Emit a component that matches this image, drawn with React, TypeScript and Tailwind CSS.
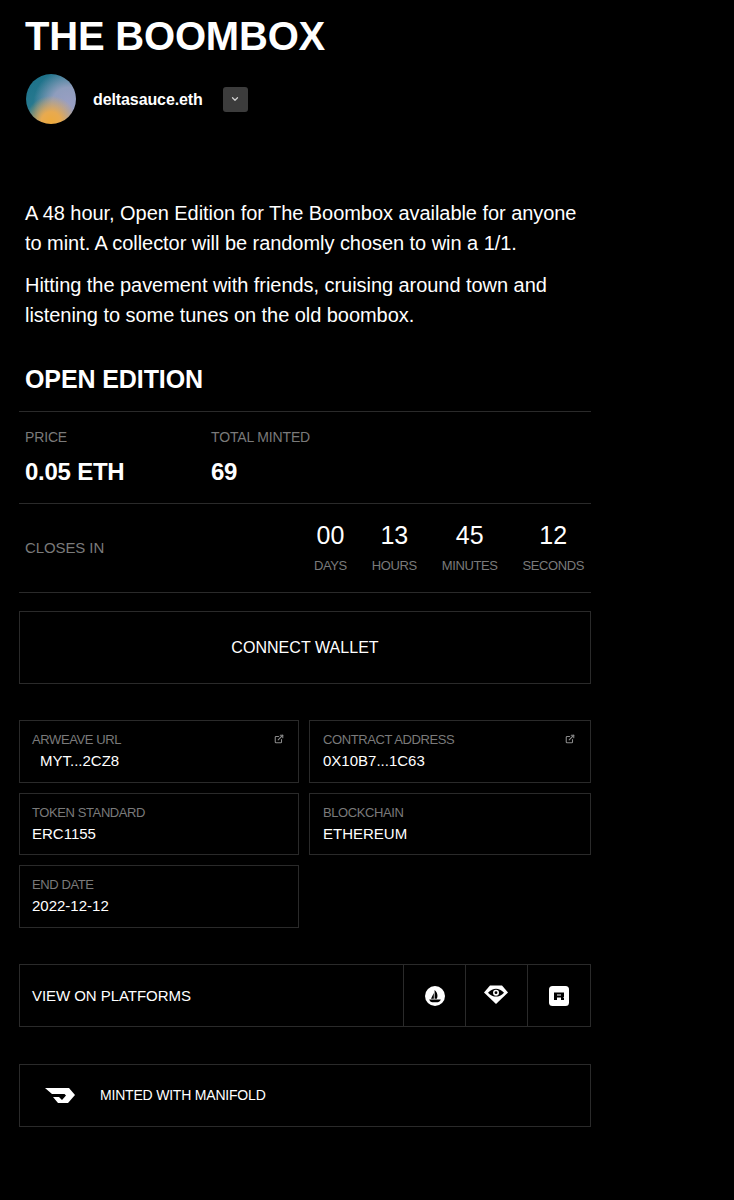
import { ExternalLink, ChevronDown } from 'lucide-react';

const countdown = [
  { value: '00', label: 'DAYS' },
  { value: '13', label: 'HOURS' },
  { value: '45', label: 'MINUTES' },
  { value: '12', label: 'SECONDS' },
];

function InfoCard({ label, value, link, indent, right }: { label: string; value: string; link?: boolean; indent?: boolean; right?: boolean }) {
  return (
    <div className={`relative h-[62.5px] border border-[#2a2a2a] pt-[9px] ${right ? 'pl-[13px]' : 'pl-3'}`}>
      <div className="text-[13px] leading-[20px] tracking-[-0.4px] text-[#7a7a7a]">{label}</div>
      <div className={`mt-[1px] text-[15px] leading-[20px] text-white ${indent ? 'pl-2' : ''}`}>{value}</div>
      {link && <ExternalLink className={`absolute top-[13px] h-[10px] w-[10px] text-[#8a8a8a] ${right ? 'right-[15px]' : 'right-[14px]'}`} strokeWidth={2.6} />}
    </div>
  );
}

export default function App() {
  return (
    <div className="min-h-[1200px] bg-black font-['Liberation_Sans',Arial,sans-serif] text-white">
      <div className="w-[572px] ml-[19px] pt-[13px]">
        <div className="px-[6px]">
          <h1 className="text-[40px] font-bold leading-[46px] tracking-[-0.2px]">THE BOOMBOX</h1>
          <div className="mt-[15px] flex items-center">
            <div className="ml-[1px] h-[50px] w-[50px] rounded-full bg-[radial-gradient(circle_at_50%_95%,#eeaa3c_0%,#e8aa50_18%,rgba(232,170,80,0)_48%),radial-gradient(circle_at_85%_60%,#9a9fc4_0%,#8f9dbd_32%,rgba(143,157,189,0)_68%),linear-gradient(150deg,#1a6f88_0%,#27798f_45%,#6f97a8_100%)]" />
            <div className="ml-[17px] mt-[2px] text-[16px] font-bold tracking-[-0.1px]">deltasauce.eth</div>
            <div className="ml-[20px] flex h-[25px] w-[25px] items-center justify-center rounded-[3px] bg-[#3c3c3c]">
              <ChevronDown className="h-[10px] w-[10px] text-[#cfcfcf]" strokeWidth={3} />
            </div>
          </div>
          <div className="mt-[74px] text-[20px] leading-[30px] tracking-[-0.05px]">
            <p>A 48 hour, Open Edition for The Boombox available for anyone to mint. A collector will be randomly chosen to win a 1/1.</p>
            <p className="mt-3">Hitting the pavement with friends, cruising around town and listening to some tunes on the old boombox.</p>
          </div>
          <h2 className="mt-[35px] text-[25px] font-bold leading-[29px] tracking-[-0.1px]">OPEN EDITION</h2>
        </div>

        <div className="mt-[17px] flex h-[93px] border-y border-[#2a2a2a] px-[6px] pt-[15px]">
          <div className="w-[186px]">
            <div className="text-[14px] leading-[20px] tracking-[-0.15px] text-[#7a7a7a]">PRICE</div>
            <div className="mt-[11px] text-[24px] font-bold leading-[28px] tracking-[-0.25px]">0.05 ETH</div>
          </div>
          <div>
            <div className="text-[14px] leading-[20px] tracking-[-0.15px] text-[#7a7a7a]">TOTAL MINTED</div>
            <div className="mt-[11px] text-[24px] font-bold leading-[28px] tracking-[-0.25px]">69</div>
          </div>
        </div>

        <div className="flex h-[89px] items-center justify-between border-b border-[#2a2a2a] pl-[6px] pr-[7px]">
          <div className="text-[15px] tracking-[-0.1px] text-[#7a7a7a]">CLOSES IN</div>
          <div className="flex gap-[25px]">
            {countdown.map((c) => (
              <div key={c.label} className="text-center">
                <div className="text-[25px] leading-[28px]">{c.value}</div>
                <div className="mt-[7px] text-[13px] leading-[20px] tracking-[-0.4px] text-[#7a7a7a]">{c.label}</div>
              </div>
            ))}
          </div>
        </div>

        <div className="mt-[18px] flex h-[73px] items-center justify-center border border-[#2a2a2a] text-[16px] tracking-[0.05px]">CONNECT WALLET</div>

        <div className="mt-[36px] grid grid-cols-[280px_282px] gap-x-[10px] gap-y-[10px]">
          <InfoCard label="ARWEAVE URL" value="MYT...2CZ8" link indent />
          <InfoCard label="CONTRACT ADDRESS" value="0X10B7...1C63" link right />
          <InfoCard label="TOKEN STANDARD" value="ERC1155" />
          <InfoCard label="BLOCKCHAIN" value="ETHEREUM" right />
          <InfoCard label="END DATE" value="2022-12-12" />
        </div>

        <div className="mt-[36.5px] flex h-[63px] items-center border border-[#2a2a2a]">
          <div className="flex-1 pl-3 pt-[1px] text-[15px] tracking-[-0.05px]">VIEW ON PLATFORMS</div>
          <div className="flex h-full w-[62px] items-center justify-center border-l border-[#2a2a2a]">
            <svg viewBox="0 0 20 20" className="h-5 w-5">
              <circle cx="10" cy="10" r="10" fill="#fff" />
              <path d="M8.800 7 6 12.800h2.800zM9.600 4c2.800 2.200 3.600 6.200 2.200 8.800H9.600z" fill="#000" />
              <path d="M4.200 13.500h11.600c-.7 2-2 2.700-3.200 2.700H7.400c-1.600 0-2.700-1.100-3.200-2.700z" fill="#000" />
            </svg>
          </div>
          <div className="flex h-full w-[62px] items-center justify-center border-l border-[#2a2a2a] pb-[2px] pr-[2px]">
            <svg viewBox="0 0 24 19" className="h-[19px] w-6">
              <path d="M6 0.500h12l6 7-12 11.500L0 7.500z" fill="#fff" />
              <path d="M4 7.700C6.500 5 9.500 3.800 12 3.800s5.500 1.200 8 3.900c-2.500 2.700-5.500 3.900-8 3.900S6.500 10.400 4 7.700z" fill="#000" />
              <circle cx="12" cy="7.700" r="3" fill="#fff" />
              <circle cx="12" cy="7.700" r="1.400" fill="#000" />
            </svg>
          </div>
          <div className="flex h-full w-[63px] items-center justify-center border-l border-[#2a2a2a]">
            <svg viewBox="0 0 20 20" className="h-5 w-5">
              <rect width="20" height="20" rx="3.500" fill="#fff" />
              <path fillRule="evenodd" d="M5 6.500h10v4.200l-.8.800.8.500V14h-3v-2.500H8V14H5zM8 8.500v1h4v-1z" fill="#000" />
            </svg>
          </div>
        </div>

        <div className="mt-[37px] flex h-[62.5px] items-center border border-[#2a2a2a]">
          <svg viewBox="0 0 30 15" className="ml-[25px] h-[15px] w-[30px]">
            <path d="M0 0H24L30 7 23 15H13L8 9H14L17 12 21 7.500 19.500 6H7z" fill="#fff" />
          </svg>
          <div className="ml-[25px] text-[14px] tracking-[-0.2px]">MINTED WITH MANIFOLD</div>
        </div>
      </div>
    </div>
  );
}
